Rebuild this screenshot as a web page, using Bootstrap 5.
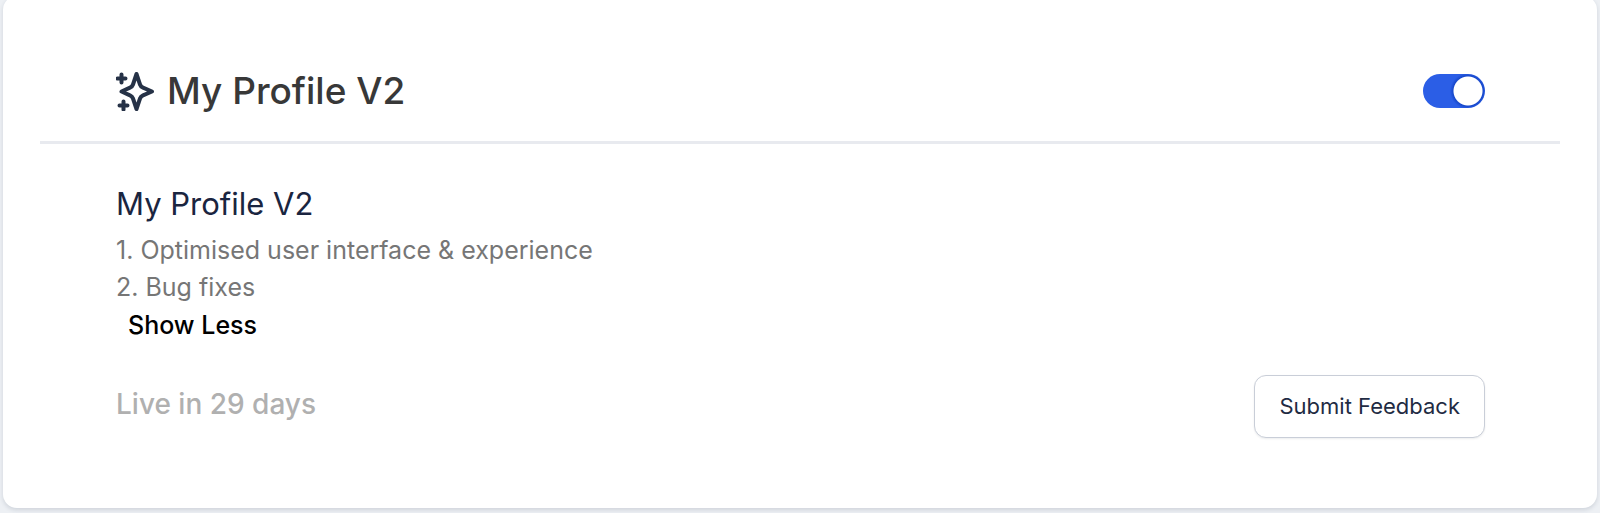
<!DOCTYPE html>
<html lang="en">
<head>
<meta charset="utf-8">
<meta name="viewport" content="width=device-width, initial-scale=1">
<title>My Profile V2</title>
<link href="https://cdn.jsdelivr.net/npm/bootstrap@5.3.0/dist/css/bootstrap.min.css" rel="stylesheet">
<style>
  body { background: #edf0f4; font-family: Inter, "Liberation Sans", sans-serif; }
  .feature-card { margin: -4px 3px 5px; padding: 0 37px 70px; border-radius: 14px; box-shadow: 0 2px 4px rgba(30, 41, 70, .14); }
  .feature-head { padding: 63px 75px 19px 76px; border-bottom: 3px solid #e8eaef; }
  .feature-main { padding: 40px 75px 0 76px; }
  .feature-title { gap: 11px; font-size: 37px; line-height: 63px; color: #383838; }
  .feature-name { font-size: 31px; line-height: 40px; color: #1a2540; }
  .feature-notes { margin-top: 8px; font-size: 25px; line-height: 37px; color: #767676; }
  .toggle-less { margin-left: 12px; font-size: 25px; line-height: 38px; color: #000; }
  .feature-foot { margin-top: 31px; }
  .live-note { font-size: 28px; line-height: 58px; color: #b0b0b0; }
  .btn-feedback { padding: 0 24px; border: 1px solid #c9ced8; border-radius: 12px; background: #fff; color: #1f2b43; font-size: 22px; line-height: 61px; box-shadow: 0 1px 2px rgba(16, 24, 40, .08); }
  .form-switch .feature-switch { width: 62px; height: 34px; margin: 0; border: 0; background: #d0d5dd; border-radius: 17px; }
  .form-switch .feature-switch:checked { background: #2b5ee6 radial-gradient(circle at 45px 17px, #fff 14px, #1748cb 15px, #2b5ee6 18px); }
</style>
</head>
<body>
<main class="feature-card bg-white">
  <header class="feature-head d-flex align-items-center justify-content-between">
    <h1 class="feature-title d-flex align-items-center fw-medium mb-0">
      <svg width="40" height="40" viewBox="0 0 40 40" fill="none" stroke="#263247" stroke-width="4" stroke-linecap="round" stroke-linejoin="round" aria-hidden="true">
        <path d="M20.500 3 24 13.500Q24.800 15.800 27 16.700L36 20.500 27 24.300Q24.800 25.200 24 27.500L20.500 38 17 27.500Q16.200 25.200 14 24.300L5.500 20.500 14 16.700Q16.200 15.800 17 13.500Z"/>
        <path d="M5.500 3.500v8M1.500 7.500h8M7.500 30.500v8M3.500 34.500h8"/>
      </svg>
      My Profile V2
    </h1>
    <div class="form-check form-switch m-0 p-0 d-flex">
      <input class="form-check-input feature-switch" type="checkbox" role="switch" aria-label="Enable My Profile V2" checked>
    </div>
  </header>
  <section class="feature-main">
    <h2 class="feature-name fw-normal mb-0">My Profile V2</h2>
    <div class="feature-notes">
      <div>1. Optimised user interface &amp; experience</div>
      <div>2. Bug fixes</div>
    </div>
    <button type="button" class="toggle-less btn btn-link border-0 p-0 fw-medium text-decoration-none">Show Less</button>
    <div class="feature-foot d-flex flex-wrap justify-content-between">
      <span class="live-note fw-medium">Live in 29 days</span>
      <button type="button" class="btn btn-feedback">Submit Feedback</button>
    </div>
  </section>
</main>
<script src="https://cdn.jsdelivr.net/npm/bootstrap@5.3.0/dist/js/bootstrap.bundle.min.js"></script>
</body>
</html>
